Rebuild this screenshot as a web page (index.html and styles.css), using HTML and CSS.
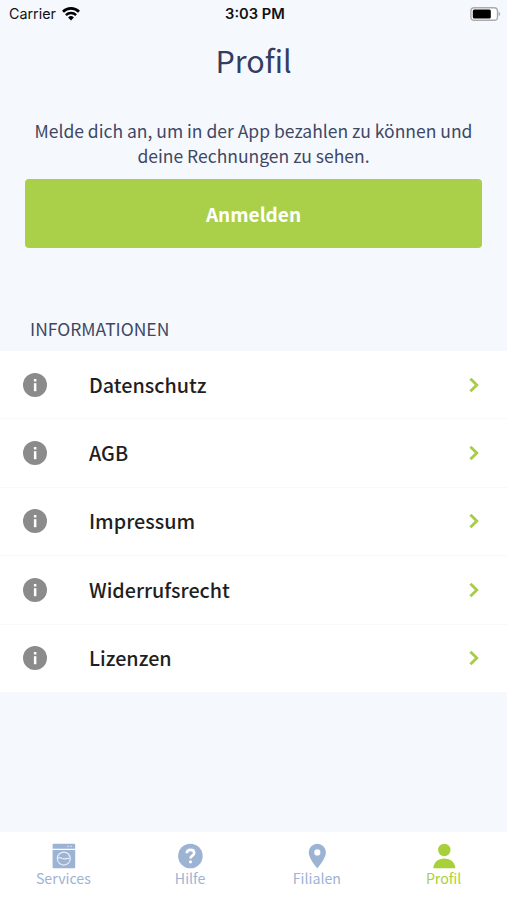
FILE: index.html
```html
<!doctype html>
<html lang="de">
<head>
    <meta charset="utf-8">
    <title>Profil</title>
    <link rel="stylesheet" href="styles.css">
</head>
<body>
<!-- Status bar -->
<div class="status-bar">
    <div class="status-left">
        <span>Carrier</span>
        <svg class="wifi" viewBox="0 0 18 14" width="18" height="14">
            <path d="M1 4.7a11.4 11.4 0 0 1 16 0" fill="none" stroke="#000" stroke-width="2.7"/>
            <path d="M3.9 8.1a7.3 7.3 0 0 1 10.2 0" fill="none" stroke="#000" stroke-width="2.4"/>
            <path d="M9 13.4l-2.9-3a4.2 4.2 0 0 1 5.8 0z"/>
        </svg>
    </div>
    <div class="status-time">3:03 PM</div>
    <div class="status-right">
        <svg viewBox="0 0 31 14" width="31" height="14">
            <rect x=".9" y=".7" width="26.6" height="12.6" rx="3.4" fill="#fff" stroke="#a9abae" stroke-width="1.4"/>
            <rect x="2.8" y="2.5" width="18" height="9" rx="1.5"/>
            <path d="M28.6 4.8c2 .7 2 3.7 0 4.4z" fill="#a9abae"/>
        </svg>
    </div>
</div>

<h1 class="title">Profil</h1>

<!-- Login -->
<div class="login">
    <p class="login-text">Melde dich an, um in der App bezahlen zu können und deine Rechnungen zu sehen.</p>
    <button class="btn">Anmelden</button>
</div>

<!-- Information list -->
<h2 class="section-title">INFORMATIONEN</h2>
<ul class="list">
    <li class="list-row">
        <svg class="info" viewBox="0 0 24 24"><use href="#icon-info"/></svg>
        <span class="list-label">Datenschutz</span>
        <svg class="chevron" viewBox="0 0 10 14"><use href="#icon-chevron"/></svg>
    </li>
    <li class="list-row">
        <svg class="info" viewBox="0 0 24 24"><use href="#icon-info"/></svg>
        <span class="list-label">AGB</span>
        <svg class="chevron" viewBox="0 0 10 14"><use href="#icon-chevron"/></svg>
    </li>
    <li class="list-row">
        <svg class="info" viewBox="0 0 24 24"><use href="#icon-info"/></svg>
        <span class="list-label">Impressum</span>
        <svg class="chevron" viewBox="0 0 10 14"><use href="#icon-chevron"/></svg>
    </li>
    <li class="list-row">
        <svg class="info" viewBox="0 0 24 24"><use href="#icon-info"/></svg>
        <span class="list-label">Widerrufsrecht</span>
        <svg class="chevron" viewBox="0 0 10 14"><use href="#icon-chevron"/></svg>
    </li>
    <li class="list-row">
        <svg class="info" viewBox="0 0 24 24"><use href="#icon-info"/></svg>
        <span class="list-label">Lizenzen</span>
        <svg class="chevron" viewBox="0 0 10 14"><use href="#icon-chevron"/></svg>
    </li>
</ul>

<!-- Tabs -->
<nav class="tabs">
    <a class="tab">
        <svg viewBox="0 0 26 26" width="26" height="26">
            <path d="M3.6.8h20.6a1 1 0 0 1 1 1v3.9H2.6V1.8a1 1 0 0 1 1-1z" fill="currentColor"/>
            <path d="M2.6 7h22.6v17.3a1 1 0 0 1-1 1H3.6a1 1 0 0 1-1-1z" fill="currentColor"/>
            <path d="M17.2 3.3h1.4M20.4 3.3h1.4" stroke="#dfe7f2" stroke-width="1.3"/>
            <circle cx="13.8" cy="15.6" r="6.5" fill="none" stroke="#e6edf6" stroke-width="1.2"/>
            <path d="M8 15.2c2.5-1.6 3.8.6 5.8.7 2 .1 3.3-.9 5.7-.5" fill="none" stroke="#e6edf6" stroke-width="1.2"/>
        </svg>
        <span>Services</span>
    </a>
    <a class="tab">
        <svg viewBox="0 0 26 26" width="26" height="26">
            <circle cx="13.4" cy="13" r="12.3" fill="currentColor"/>
            <path d="M9.8 10.3c.1-2.2 1.6-3.4 3.7-3.4 2.2 0 3.7 1.2 3.7 3 0 2.8-3.7 2.7-3.7 5.6" fill="none" stroke="#fff" stroke-width="2.6"/>
            <circle cx="13.5" cy="18.8" r="1.6" fill="#fff"/>
        </svg>
        <span>Hilfe</span>
    </a>
    <a class="tab">
        <svg viewBox="0 0 26 26" width="26" height="26">
            <path d="M13.3.8a8.6 8.6 0 0 0-8.6 8.6c0 6.2 8.6 15.9 8.6 15.9s8.6-9.7 8.6-15.9A8.6 8.6 0 0 0 13.3.8zm0 5.5a3.1 3.1 0 1 1 0 6.2 3.1 3.1 0 0 1 0-6.2z" fill="currentColor" fill-rule="evenodd"/>
        </svg>
        <span>Filialen</span>
    </a>
    <a class="tab tab-active">
        <svg viewBox="0 0 26 26" width="26" height="26">
            <circle cx="13.3" cy="7" r="6.2" fill="currentColor"/>
            <path d="M2.3 25.3c.3-6 4.9-9.7 11-9.7s10.7 3.7 11 9.7z" fill="currentColor"/>
        </svg>
        <span>Profil</span>
    </a>
</nav>

<!-- Shared icons -->
<svg class="sprite">
    <symbol id="icon-info" viewBox="0 0 24 24">
        <circle cx="12" cy="12" r="12" fill="#8b8b8b"/>
        <rect x="10.9" y="6" width="2.5" height="2.5" fill="#fff"/>
        <rect x="10.9" y="10.2" width="2.5" height="8" fill="#fff"/>
    </symbol>
    <symbol id="icon-chevron" viewBox="0 0 10 14">
        <path d="M1.4 .7L7.8 7l-6.4 6.3" fill="none" stroke="#a6cc48" stroke-width="2.8"/>
    </symbol>
</svg>
</body>
</html>
```
FILE: styles.css
```css
* { margin: 0; padding: 0; box-sizing: border-box; }
body { height: 900px; overflow: hidden; display: flex; flex-direction: column; background-color: #f5f9fe; color: #3f4763; font-family: 'Noto Sans CJK SC', 'Open Sans', sans-serif; font-size: 17.5px; }

.status-bar { display: grid; grid-template-columns: 1fr auto 1fr; align-items: center; height: 27px; padding: 0 6px 0 9px; font-family: Inter, Roboto, sans-serif; font-size: 14.3px; color: #111; }
.status-left { display: flex; align-items: center; gap: 6px; }
.status-time { font-size: 14.7px; font-weight: 600; }
.status-right { display: flex; justify-content: flex-end; }

.title { height: 89px; line-height: 67px; text-align: center; font-size: 30.5px; font-weight: 400; color: #343d61; }

.login { padding: 2px 25px 0; }
.login-text { line-height: 25px; text-align: center; }
.btn { display: block; width: 100%; height: 69px; margin-top: 11px; border: 0; border-radius: 4px; background-color: #aad04a; color: #fff; font-family: inherit; font-size: 19px; font-weight: 700; padding-bottom: 1px; }

.section-title { margin-top: 67px; padding-left: 30px; height: 36px; line-height: 28px; font-size: 17.5px; font-weight: 400; }

.list { list-style: none; background-color: #fff; }
.list-row { display: flex; align-items: center; height: 68.4px; padding: 0 28.5px 0 23px; border-bottom: 1px solid #f8f9fa; }
.list-label { flex: 1; margin-left: 42px; padding-bottom: 1px; font-size: 19.75px; font-weight: 500; color: #1f1f1f; }
.info { width: 24px; height: 24px; }
.chevron { width: 10px; height: 14px; overflow: visible; }

.tabs { display: grid; grid-template-columns: repeat(4, 1fr); height: 68px; margin-top: auto; padding-top: 11px; background-color: #fff; }
.tab { display: flex; flex-direction: column; align-items: center; color: #9cb3d3; font-size: 14.2px; line-height: 18px; }
.tab-active { color: #a8d038; }

.sprite { display: none; }
```
